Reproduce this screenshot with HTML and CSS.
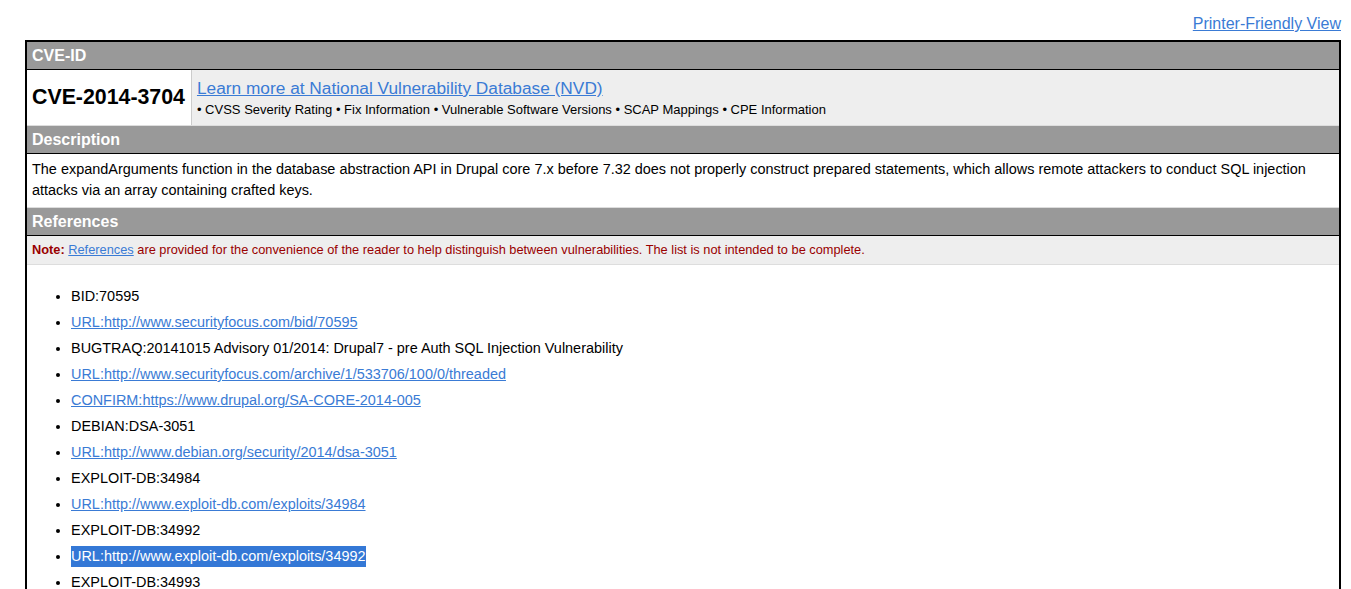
FILE: index.html
```html
<!DOCTYPE html>
<html>
<head>
<meta charset="utf-8">
<title>CVE-2014-3704</title>
<link rel="stylesheet" href="styles.css">
</head>
<body>
<div class="page">
  <div class="printer"><a href="#">Printer-Friendly View</a></div>
  <table class="cve">
    <tr><th colspan="2" class="hdr">CVE-ID</th></tr>
    <tr class="idrow">
      <td class="cveid">CVE-2014-3704</td>
      <td class="nvd">
        <a class="nvdlink" href="#">Learn more at National Vulnerability Database (NVD)</a>
        <div class="nvdsub">• CVSS Severity Rating • Fix Information • Vulnerable Software Versions • SCAP Mappings • CPE Information</div>
      </td>
    </tr>
    <tr><th colspan="2" class="hdr">Description</th></tr>
    <tr><td colspan="2" class="desc">The expandArguments function in the database abstraction API in Drupal core 7.x before 7.32 does not properly construct prepared statements, which allows remote attackers to conduct SQL injection attacks via an array containing crafted keys.</td></tr>
    <tr><th colspan="2" class="hdr">References</th></tr>
    <tr><td colspan="2" class="note"><b>Note:</b> <a href="#">References</a> are provided for the convenience of the reader to help distinguish between vulnerabilities. The list is not intended to be complete.</td></tr>
    <tr><td colspan="2" class="refs">
      <ul>
        <li>BID:70595</li>
        <li><a href="#">URL:http://www.securityfocus.com/bid/70595</a></li>
        <li>BUGTRAQ:20141015 Advisory 01/2014: Drupal7 - pre Auth SQL Injection Vulnerability</li>
        <li><a href="#">URL:http://www.securityfocus.com/archive/1/533706/100/0/threaded</a></li>
        <li><a href="#">CONFIRM:https://www.drupal.org/SA-CORE-2014-005</a></li>
        <li>DEBIAN:DSA-3051</li>
        <li><a href="#">URL:http://www.debian.org/security/2014/dsa-3051</a></li>
        <li>EXPLOIT-DB:34984</li>
        <li><a href="#">URL:http://www.exploit-db.com/exploits/34984</a></li>
        <li>EXPLOIT-DB:34992</li>
        <li><a class="selected" href="#">URL:http://www.exploit-db.com/exploits/34992</a></li>
        <li>EXPLOIT-DB:34993</li>
        <li><a href="#">URL:http://www.exploit-db.com/exploits/34993</a></li>
      </ul>
    </td></tr>
  </table>
</div>
</body>
</html>
```
FILE: styles.css
```css
html, body {
  margin: 0;
  padding: 0;
  background: #fff;
  font-family: "Liberation Sans", Arial, sans-serif;
  color: #000;
}
a {
  color: #3a7bd5;
  text-decoration: underline;
}
.page {
  padding: 15px 10px 0 25px;
}
.printer {
  text-align: right;
  font-size: 16px;
  line-height: 18px;
  margin-bottom: 7px;
}
.cve {
  width: 100%;
  border-collapse: collapse;
  border: 2px solid #000;
}
.hdr {
  background: #999;
  color: #fff;
  font-weight: bold;
  font-size: 16px;
  line-height: 21px;
  text-align: left;
  padding: 3px 5px;
  border-bottom: 1px solid #000;
}
.idrow td {
  border-bottom: 1px solid #ddd;
}
.cveid {
  width: 1px;
  white-space: nowrap;
  font-weight: bold;
  font-size: 21.33px;
  padding: 0 6px 0 5px;
  vertical-align: middle;
  background: #fff;
}
.nvd {
  background: #eee;
  border-left: 1px solid #ccc;
  padding: 7px 5px 6px 5px;
  vertical-align: middle;
}
.nvdlink {
  font-size: 17.3px;
  line-height: 22px;
}
.nvdsub {
  font-size: 13px;
  line-height: 18px;
  margin-top: 2px;
}
.desc {
  font-size: 14.45px;
  line-height: 21px;
  padding: 5px 5px 6px 5px;
  border-bottom: 1px solid #ddd;
}
.note {
  background: #eee;
  color: #990000;
  font-size: 12.8px;
  line-height: 18px;
  padding: 5px 5px 5px 5px;
  border-bottom: 1px solid #ddd;
}
.refs {
  padding: 21px 5px 0 5px;
  font-size: 14.45px;
}
.refs ul {
  margin: 0;
  padding-left: 39px;
}
.refs li {
  line-height: 20px;
  margin-bottom: 6px;
}
.selected {
  background: #3478d6;
  color: #fff;
  text-decoration: none;
  padding: 2px 0 3px 0;
}
```
